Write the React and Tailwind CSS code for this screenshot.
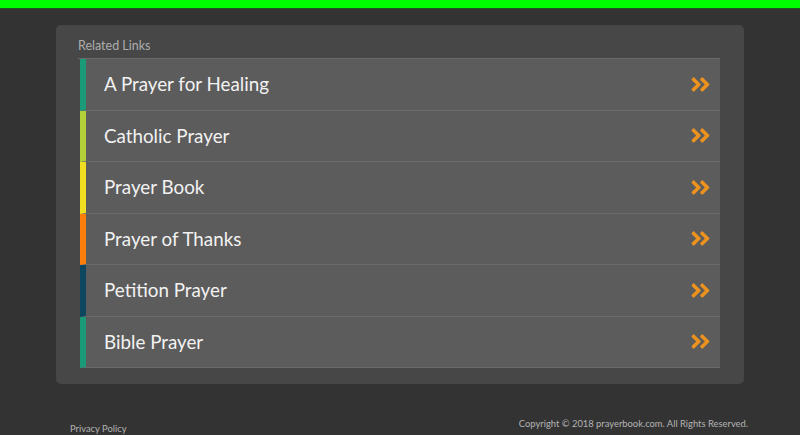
import { FaAngleDoubleRight } from 'react-icons/fa'

const LINKS = [
  { label: 'A Prayer for Healing', color: 'border-[#1b9a78]' },
  { label: 'Catholic Prayer', color: 'border-[#b3cf3a]' },
  { label: 'Prayer Book', color: 'border-[#f3df22]' },
  { label: 'Prayer of Thanks', color: 'border-[#fb7d0c]' },
  { label: 'Petition Prayer', color: 'border-[#0e465f]' },
  { label: 'Bible Prayer', color: 'border-[#1b9a78]' },
]

function LinkRow({ label, color }) {
  return (
    <a
      href="#"
      className={`flex h-[51.5px] items-center justify-between border-l-[6px] ${color} border-b border-b-[#6a6a6a] bg-[#5c5c5c] pl-[18px] pr-[8px]`}
    >
      <span className="text-[18.8px] text-[#f2f2f2]">{label}</span>
      <FaAngleDoubleRight className="h-[23px] w-[23px] text-[#ec921f]" />
    </a>
  )
}

export default function App() {
  return (
    <div
      className="min-h-[435px] bg-[#333333]"
      style={{ fontFamily: "Lato, 'Open Sans', sans-serif" }}
    >
      <div className="h-[9px] bg-[#00ff00] border-b border-[#1a5a1a]" />

      <div className="px-[56px] pt-[16px]">
        <div className="w-[688px] rounded-[5px] bg-[#474747] pb-[16px] pl-[22px] pr-[24px] pt-[13px]">
          <p className="mb-[5px] text-[12.5px] leading-[15px] text-[#adadad]">Related Links</p>
          <div className="border-t border-[#6a6a6a] pl-[2px]">
            {LINKS.map((l, i) => (
              <LinkRow key={i} {...l} />
            ))}
          </div>
        </div>
      </div>

      <footer className="flex justify-between pl-[70px] pr-[52px] pt-[33px] text-[9.4px] text-[#b3b3b3]">
        <a href="#" className="mt-[5px]">Privacy Policy</a>
        <span>Copyright © 2018 prayerbook.com. All Rights Reserved.</span>
      </footer>
    </div>
  )
}
